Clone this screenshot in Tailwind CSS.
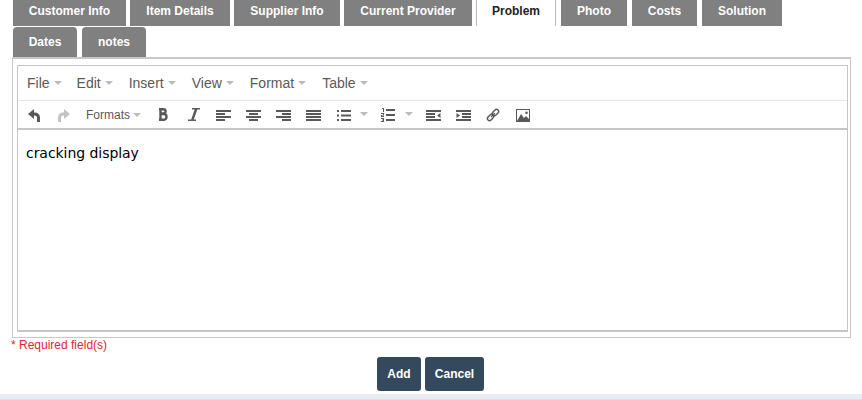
<!DOCTYPE html>
<html><head><meta charset="utf-8"><script src="https://cdn.jsdelivr.net/npm/@tailwindcss/browser@4"></script></head>
<body class="bg-white overflow-hidden font-['Liberation_Sans',sans-serif]">
<div class="h-[400px] w-[862px] overflow-hidden flex flex-col">
  <div class="pl-[13px] pr-[70px] -mt-[4px] flex flex-wrap gap-x-[4px] gap-y-[1px] text-[12px] font-bold text-white leading-[30px]">
    <div class="bg-[#808080] rounded-t-[4px] w-[113px] text-center">Customer Info</div>
    <div class="bg-[#808080] rounded-t-[4px] w-[100px] text-center">Item Details</div>
    <div class="bg-[#808080] rounded-t-[4px] w-[106px] text-center">Supplier Info</div>
    <div class="bg-[#808080] rounded-t-[4px] w-[128px] text-center">Current Provider</div>
    <div class="bg-white text-[#222] border-x border-[#bbb] w-[80px] text-center">Problem</div>
    <div class="bg-[#808080] rounded-t-[4px] w-[66px] text-center ml-[1px]">Photo</div>
    <div class="bg-[#808080] rounded-t-[4px] w-[65px] ml-[1px] text-center">Costs</div>
    <div class="bg-[#808080] rounded-t-[4px] w-[80px] ml-[1px] text-center">Solution</div>
    <div class="bg-[#808080] rounded-t-[4px] w-[64px] text-center">Dates</div>
    <div class="bg-[#808080] rounded-t-[4px] w-[64px] ml-[1px] text-center">notes</div>
  </div>
  <div class="ml-[12px] w-[839px] h-[281px] border border-[#c8c8c8] border-t-2 pt-[6px] pl-[4px] pr-[2px] pb-[5px]">
    <div class="h-full flex flex-col border border-[#c5c5c5] border-b-2 bg-white">
      <div class="h-[35px] shrink-0 border-b border-[#e6e6e6] flex items-center pl-[9px] gap-[16px] text-[14px] text-[#595959]">
        <span class="flex items-center gap-[4px] -mr-[1px]">File<i class="w-0 h-0 border-x-[4px] border-x-transparent border-t-[4px] border-t-[#bbb]"></i></span>
        <span class="flex items-center gap-[4px]">Edit<i class="w-0 h-0 border-x-[4px] border-x-transparent border-t-[4px] border-t-[#bbb]"></i></span>
        <span class="flex items-center gap-[4px]">Insert<i class="w-0 h-0 border-x-[4px] border-x-transparent border-t-[4px] border-t-[#bbb]"></i></span>
        <span class="flex items-center gap-[4px]">View<i class="w-0 h-0 border-x-[4px] border-x-transparent border-t-[4px] border-t-[#bbb]"></i></span>
        <span class="flex items-center gap-[4px]">Format<i class="w-0 h-0 border-x-[4px] border-x-transparent border-t-[4px] border-t-[#bbb]"></i></span>
        <span class="flex items-center gap-[4px]">Table<i class="w-0 h-0 border-x-[4px] border-x-transparent border-t-[4px] border-t-[#bbb]"></i></span>
      </div>
      <div class="h-[29px] shrink-0 border-b-2 border-[#c5c5c5] flex items-center relative text-[#595959]">
        <svg class="absolute left-[10px] top-[8px]" width="12" height="13" viewBox="0 0 12 13"><path fill="#595959" d="M6 0 0 5l6 5z"/><path fill="none" stroke="#595959" stroke-width="3" d="M4 5h2.500c2.500 0 4 1.500 4 4v4"/></svg>
        <svg class="absolute left-[40px] top-[8px]" width="12" height="13" viewBox="0 0 12 13"><path fill="#c4c4c4" d="M6 0l6 5-6 5z"/><path fill="none" stroke="#c4c4c4" stroke-width="3" d="M8 5H5.500c-2.500 0-4 1.500-4 4v4"/></svg>
        <span class="absolute left-[68px] top-[6px] text-[12px] leading-[16px]">Formats</span>
        <i class="absolute left-[115px] top-[12px] w-0 h-0 border-x-[4px] border-x-transparent border-t-[4px] border-t-[#bbb]"></i>
        <svg class="absolute left-[141px] top-[7px]" width="9" height="13" viewBox="0 0 9 13" fill="none" stroke="#595959" stroke-width="2.400"><path d="M1.500 0v13M0 1.200h4.500c2.800 0 2.800 4.300 0 4.300H1.500M1.500 6h3.500c3.300 0 3.300 5.800 0 5.800H0"/></svg>
        <svg class="absolute left-[170px] top-[7px]" width="12" height="13" viewBox="0 0 12 13" fill="#595959"><path d="M4 0h8v1.500H9.300L5.800 11.500H8V13H0v-1.500h3.200L6.700 1.500H4z"/></svg>
        <svg class="absolute left-[198px] top-[9px]" width="15" height="12" viewBox="0 0 15 12" fill="#595959"><path d="M0 0h15v2H0zM0 3h9v2H0zM0 6h15v2H0zM0 9h9v2H0z"/></svg>
        <svg class="absolute left-[228px] top-[9px]" width="15" height="12" viewBox="0 0 15 12" fill="#595959"><path d="M0 0h15v2H0zM3 3h9v2H3zM0 6h15v2H0zM3 9h9v2H3z"/></svg>
        <svg class="absolute left-[258px] top-[9px]" width="15" height="12" viewBox="0 0 15 12" fill="#595959"><path d="M0 0h15v2H0zM6 3h9v2H6zM0 6h15v2H0zM6 9h9v2H6z"/></svg>
        <svg class="absolute left-[288px] top-[9px]" width="15" height="12" viewBox="0 0 15 12" fill="#595959"><path d="M0 0h15v2H0zM0 3h15v2H0zM0 6h15v2H0zM0 9h15v2H0z"/></svg>
        <svg class="absolute left-[319px] top-[9px]" width="14" height="12" viewBox="0 0 14 12" fill="#595959"><path d="M0 0h2v2H0zM4 0h10v2H4zM0 4.500h2v2H0zM4 4.500h10v2H4zM0 9h2v2H0zM4 9h10v2H4z"/></svg>
        <i class="absolute left-[342px] top-[11px] w-0 h-0 border-x-[4px] border-x-transparent border-t-[4px] border-t-[#bbb]"></i>
        <svg class="absolute left-[363px] top-[7px]" width="14" height="14" viewBox="0 0 14 14" fill="#595959"><path d="M5 1h9v2H5zM5 6h9v2H5zM5 11h9v2H5zM1 0h2v4H2V1H1zM0 5h3v2.500H1V8h2v1H0V7h2V6H0zM0 10h3v4H0v-1h2v-.5H1v-1h1V11H0z"/></svg>
        <i class="absolute left-[387px] top-[11px] w-0 h-0 border-x-[4px] border-x-transparent border-t-[4px] border-t-[#bbb]"></i>
        <svg class="absolute left-[408px] top-[9px]" width="15" height="12" viewBox="0 0 15 12" fill="#595959"><path d="M0 0h15v2H0zM0 3h9v2H0zM0 6h9v2H0zM0 9h15v2H0zM14.500 3v5L11 5.500z"/></svg>
        <svg class="absolute left-[438px] top-[9px]" width="15" height="12" viewBox="0 0 15 12" fill="#595959"><path d="M0 0h15v2H0zM6 3h9v2H6zM6 6h9v2H6zM0 9h15v2H0zM.5 3v5L4 5.500z"/></svg>
        <svg class="absolute left-[468px] top-[7px]" width="14" height="14" viewBox="0 0 14 14" fill="none" stroke-linecap="round"><path d="M8.500 5.500 10.500 3.500M3.500 10.500 5.500 8.500" stroke="#595959" stroke-width="5.600"/><path d="M8.500 5.500 10.500 3.500M3.500 10.500 5.500 8.500" stroke="#fff" stroke-width="2.800"/><path d="M5.500 8.500 8.500 5.500" stroke="#595959" stroke-width="1.400"/></svg>
        <svg class="absolute left-[498px] top-[8px]" width="14" height="13" viewBox="0 0 14 13"><path fill="#595959" fill-rule="evenodd" d="M0 0h14v13H0zM1 1v11h12V1z"/><path fill="#595959" d="M1 12 5 5l3 4 2-2 3 3v2z"/><circle cx="10.500" cy="3.800" r="1.300" fill="#595959"/></svg>
      </div>
      <div class="flex-1 px-[8px] pt-[13px] text-[14px] leading-[20px] tracking-[-0.05px] font-['DejaVu_Sans',sans-serif] text-black">cracking display</div>
    </div>
  </div>
  <p class="pl-[11px] text-[12px] leading-[14px] text-[#e6242f]">* Required field(s)</p>
  <div class="flex justify-center gap-[4px] mt-[5px] text-[12px] font-bold text-white pr-[1px]">
    <button class="w-[44px] h-[34px] bg-[#34495e] rounded-[3px]">Add</button>
    <button class="w-[59px] h-[34px] bg-[#34495e] rounded-[3px]">Cancel</button>
  </div>
  <div class="mt-[3px] flex-1 bg-[#e9edf3] border-b border-[#dde1e6]"></div>
</div>
</body></html>
